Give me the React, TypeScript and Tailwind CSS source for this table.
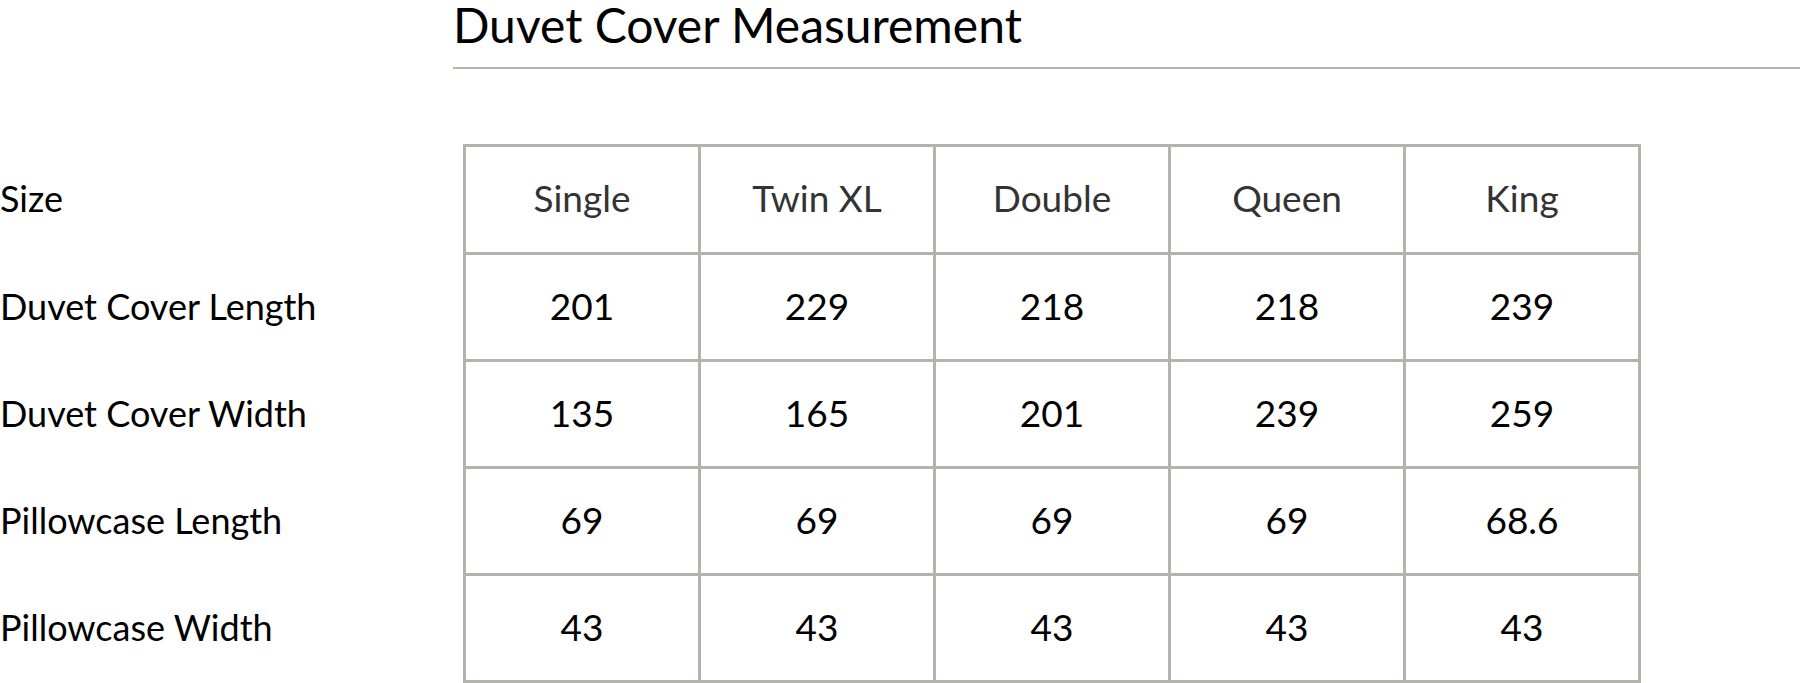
const headers = ["Single", "Twin XL", "Double", "Queen", "King"];

const rows = [
  { label: "Duvet Cover Length", values: ["201", "229", "218", "218", "239"] },
  { label: "Duvet Cover Width", values: ["135", "165", "201", "239", "259"] },
  { label: "Pillowcase Length", values: ["69", "69", "69", "69", "68.6"] },
  { label: "Pillowcase Width", values: ["43", "43", "43", "43", "43"] },
];

export default function App() {
  return (
    <main className="w-[1800px] h-[683px] bg-white overflow-hidden font-['Lato',sans-serif]">
      {/* Title with rule */}
      <div className="ml-[453px]">
        <h1 className="h-[67px] pt-[1px] text-[48px] leading-[48px] text-black">
          Duvet Cover Measurement
        </h1>
        <div className="h-[2px] bg-[#b3b3a9]" />
      </div>

      <div className="flex mt-[75px]">
        {/* Row labels */}
        <div className="w-[463px] flex flex-col pt-[3px] gap-[3px] text-[36px] text-black">
          <div className="h-[105px] pb-[4px] flex items-center">Size</div>
          {rows.map((row) => (
            <div key={row.label} className="h-[104px] pb-[3px] flex items-center">
              {row.label}
            </div>
          ))}
        </div>

        {/* Measurement grid */}
        <div className="grid grid-cols-[repeat(5,232px)] grid-rows-[105px_repeat(4,104px)] gap-[3px] p-[3px] bg-[#b3b3a9] text-[37px]">
          {headers.map((h) => (
            <div key={h} className="bg-white pb-[4px] flex items-center justify-center text-[#333333]">
              {h}
            </div>
          ))}
          {rows.map((row) =>
            row.values.map((v, i) => (
              <div key={row.label + i} className="bg-white pb-[2px] flex items-center justify-center text-black">
                {v}
              </div>
            ))
          )}
        </div>
      </div>
    </main>
  );
}
